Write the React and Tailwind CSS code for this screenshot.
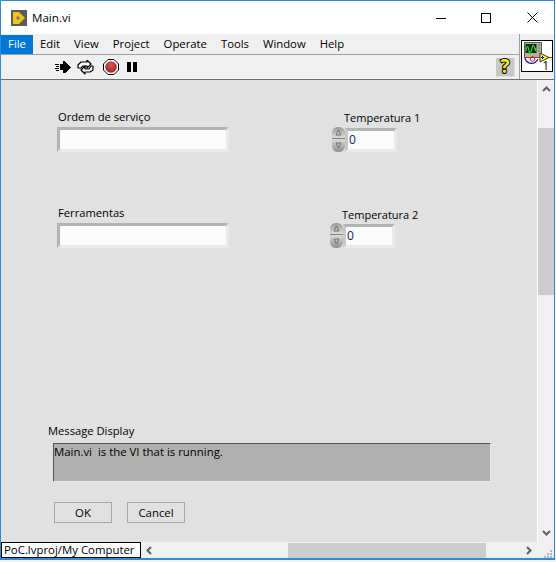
const menus = ['Edit', 'View', 'Project', 'Operate', 'Tools', 'Window', 'Help'];

function RunArrow() {
  return (
    <svg width="16" height="13" viewBox="0 0 16 13" shapeRendering="crispEdges" className="mt-[1px]">
      <path fill="#000" d="M8 0h2v1h1v1h1v1h1v1h1v1h1v1h1v1h-1v1h-1v1h-1v1h-1v1h-1v1H8v-3H5V3h3z" />
      <path fill="#000" d="M0 3h4v1H0zM1 5h3v1H1zM0 7h4v1H0zM1 9h3v1H1z" />
    </svg>
  );
}

function RunContinuous() {
  return (
    <svg width="17" height="15" viewBox="0 0 17 15" fill="#fff" stroke="#000" strokeWidth="1.200" strokeLinejoin="round">
      <path d="M1 8V5l3-3h6V0l4 4-4 4V6H6L4 8z" />
      <path d="M16 6v4l-3 2H8v2L4 10l4-4v3h4l2-3z" />
    </svg>
  );
}

function StopButton() {
  return (
    <svg width="16" height="16" viewBox="0 0 16 16">
      <defs>
        <radialGradient id="stop" cx="50%" cy="35%" r="70%">
          <stop offset="0" stopColor="#d45a5a" />
          <stop offset="1" stopColor="#a31c1c" />
        </radialGradient>
      </defs>
      <path d="M5 .5h6L15.500 5v6L11 15.500H5L.5 11V5z" fill="#fff" stroke="#000" />
      <circle cx="8" cy="8" r="5.800" fill="url(#stop)" />
    </svg>
  );
}

function HelpIcon() {
  return (
    <div className="ml-auto mr-[4px] flex h-[19px] w-[19px] items-center justify-center border-r border-b border-[#dcdcdc] bg-[#c8c8c8]">
      <span className="text-[19px] font-bold leading-none text-[#f5e61e] [-webkit-text-stroke:2px_#000] [paint-order:stroke_fill]">
        ?
      </span>
    </div>
  );
}

function ViIcon() {
  return (
    <div className="relative h-[32px] w-[32px] border border-black bg-white">
      <svg width="30" height="30" viewBox="0 0 30 30" className="absolute left-0 top-0">
        <rect x="2.500" y="1.500" width="17" height="15" fill="#b3b69a" stroke="#555" />
        <rect x="3.500" y="3" width="11" height="9" fill="#0c2a10" />
        <path d="M4 10c1-6 2-6 3 0s2 1 3-3 2-3 3 1 1 0 1-1" fill="none" stroke="#27d63a" strokeWidth="1.200" />
        <path d="M16 4h2M16 7h2M16 10h2" stroke="#666" />
        <path d="M3 17c2 7 10 7 13 1" fill="none" stroke="#1a1a9c" strokeWidth="1.200" />
        <path d="M3 16.500h15M26 16.500h4" stroke="#d12020" />
        <circle cx="10.500" cy="18" r="2.300" fill="none" stroke="#d12020" />
        <path d="M18 12l9 4.500-9 4.500z" fill="#f7ee2a" stroke="#333" />
        <path d="M19 16.500h3M20.500 15v3" stroke="#000" />
      </svg>
      <span className="absolute bottom-[1px] right-[3px] text-[12px] leading-[9px] text-black">1</span>
    </div>
  );
}

function TextControl({ label, className }) {
  return (
    <div className={className}>
      <div className="pl-[1px] text-[11.2px] leading-[16px] text-black">{label}</div>
      <div className="mt-[2px] h-[25px] w-[172px] border-[3px] border-t-[#b4b4b4] border-l-[#b4b4b4] border-r-[#eaeaea] border-b-[#eaeaea] bg-[#fbfbfb]" />
    </div>
  );
}

function NumericControl({ label, className, gapClass }) {
  return (
    <div className={className}>
      <div className="pl-[12px] text-[11px] leading-[16px] text-black">{label}</div>
      <div className={`${gapClass} flex items-center`}>
        <div className="flex h-[25px] w-[13px] flex-col overflow-hidden rounded-[6px] bg-[#bdbdbd]">
          <div className="flex h-[12px] items-center justify-center border-b border-[#808080] bg-gradient-to-b from-[#999999] to-[#dcdcdc]">
            <svg width="7" height="7" viewBox="0 0 7 7"><path d="M3.500 1 6 6H1z" fill="none" stroke="#707070" /></svg>
          </div>
          <div className="flex flex-1 items-center justify-center bg-gradient-to-b from-[#dcdcdc] to-[#8e8e8e]">
            <svg width="7" height="7" viewBox="0 0 7 7"><path d="M3.500 6 6 1H1z" fill="none" stroke="#707070" /></svg>
          </div>
        </div>
        <div className="h-[24px] w-[52px] border-[3px] border-t-[#b4b4b4] border-l-[#c8c8c8] border-r-[#eaeaea] border-b-[#eaeaea] bg-[#fbfbfb] pl-[1px] text-[12px] leading-[17px] text-[#0b2a5a]">
          0
        </div>
      </div>
    </div>
  );
}

function PanelButton({ children }) {
  return (
    <div className="flex h-[21px] w-[58px] items-center justify-center border border-[#a8a8a8] text-[11.4px] text-black">
      {children}
    </div>
  );
}

export default function App() {
  return (
    <div className="h-[562px] w-[556px] overflow-hidden bg-[#f2f2f2] font-['Open_Sans','Noto_Sans',sans-serif]">
      <div className="flex h-[560px] w-[555px] flex-col border-x border-t border-b-2 border-[#2a8ce0]">
        {/* title bar */}
        <div className="flex h-[33px] items-center bg-white pl-[10px]">
          <div className="flex h-[16px] w-[16px] items-center justify-center bg-[#5b5b5b]">
            <svg width="14" height="14" viewBox="0 0 14 14">
              <path d="M1 1h6l6 6-6 6H1z" fill="#f2c21b" />
              <path d="M4 7h4M6 5v4" stroke="#5a6a9a" />
            </svg>
          </div>
          <span className="ml-[5px] text-[11.6px] text-black">Main.vi</span>
          <div className="ml-auto flex items-center">
            <svg width="10" height="10" viewBox="0 0 10 10" shapeRendering="crispEdges" className="mr-[35px]"><path d="M0 5.500h10" stroke="#000" /></svg>
            <svg width="10" height="10" viewBox="0 0 10 10" shapeRendering="crispEdges" className="mr-[36px]"><rect x=".5" y=".5" width="9" height="9" fill="none" stroke="#000" /></svg>
            <svg width="11" height="11" viewBox="0 0 11 11" className="mr-[16px]"><path d="M.5.5l10 10M10.500.5l-10 10" stroke="#000" /></svg>
          </div>
        </div>

        {/* menu and toolbar, with the VI icon at the right */}
        <div className="flex h-[46px] border-b border-[#6e6e6e] bg-[#f0f0f0]">
          <div className="flex min-w-0 flex-1 flex-col">
            <div className="flex h-[20px] items-center text-[11.3px] text-black">
              <div className="flex h-[19px] w-[32px] items-center justify-center bg-[#0078d7] text-white">File</div>
              <div className="ml-[7px] flex items-center gap-[14px]">
                {menus.map((m) => (
                  <span key={m}>{m}</span>
                ))}
              </div>
            </div>
            <div className="h-[1px] bg-[#a0a0a0]" />
            <div className="flex flex-1 items-center pl-[54px]">
              <RunArrow />
              <div className="ml-[6px] flex"><RunContinuous /></div>
              <div className="ml-[9px] flex"><StopButton /></div>
              <div className="ml-[8px] flex gap-[2px]">
                <div className="h-[10px] w-[4px] bg-black" />
                <div className="h-[10px] w-[4px] bg-black" />
              </div>
              <HelpIcon />
            </div>
          </div>
          <div className="w-[35px] border-l border-[#a0a0a0] pl-[1px] pt-[6px]">
            <ViIcon />
          </div>
        </div>

        {/* panel + vertical scrollbar */}
        <div className="flex min-h-0 flex-1">
          <div className="flex w-[536px] flex-col bg-[#e1e1e1]">
            <div className="flex h-[343px]">
              <div className="ml-[56px] w-[285px]">
                <TextControl label="Ordem de serviço" className="mt-[29px]" />
                <TextControl label="Ferramentas" className="mt-[53px]" />
              </div>
              <div>
                <NumericControl label="Temperatura 1" gapClass="mt-[1px]" className="ml-[-10px] mt-[30px]" />
                <NumericControl label="Temperatura 2" gapClass="mt-0" className="ml-[-12px] mt-[55px]" />
              </div>
            </div>
            <div className="ml-[47px]">
              <div className="text-[11.2px] leading-[16px] text-black">Message Display</div>
              <div className="ml-[5px] mt-[4px] h-[39px] w-[438px] border border-[#e8e8e8] border-l-[#555] border-t-[#555] bg-[#b0b0b0] text-[11.4px] leading-[15px] text-black">
                Main.vi&nbsp; is the VI that is running.
              </div>
              <div className="ml-[6px] mt-[20px] flex gap-[15px]">
                <PanelButton>OK</PanelButton>
                <PanelButton>Cancel</PanelButton>
              </div>
            </div>
          </div>
          <div className="flex w-[17px] flex-col items-center border-l border-white bg-[#f0f0f0]">
            <svg width="9" height="6" viewBox="0 0 9 6" className="mt-[6px]"><path d="M1 5l3.500-3.500L8 5" fill="none" stroke="#606060" strokeWidth="2" /></svg>
            <div className="mt-[36px] h-[167px] w-[16px] bg-[#cdcdcd]" />
            <svg width="9" height="6" viewBox="0 0 9 6" className="mb-[6px] mt-auto"><path d="M1 1l3.500 3.500L8 1" fill="none" stroke="#606060" strokeWidth="2" /></svg>
          </div>
        </div>

        {/* status path + horizontal scrollbar */}
        <div className="flex h-[16px] items-center bg-[#f0f0f0]">
          <div className="flex h-[16px] w-[140px] items-center whitespace-nowrap border border-black bg-white pl-[2px] text-[11.4px] leading-none text-black">
            PoC.lvproj/My Computer
          </div>
          <svg width="6" height="9" viewBox="0 0 6 9" className="ml-[5px]"><path d="M5 1 1.500 4.500 5 8" fill="none" stroke="#606060" strokeWidth="2" /></svg>
          <div className="ml-[136px] h-[15px] w-[198px] self-end bg-[#cdcdcd]" />
          <svg width="6" height="9" viewBox="0 0 6 9" className="ml-[40px]"><path d="M1 1l3.500 3.500L1 8" fill="none" stroke="#606060" strokeWidth="2" /></svg>
          <svg width="8" height="8" viewBox="0 0 8 8" shapeRendering="crispEdges" className="ml-[12px] self-end">
            <path fill="#b8b8b8" d="M6 0h2v2H6zM3 3h2v2H3zM6 3h2v2H6zM0 6h2v2H0zM3 6h2v2H3zM6 6h2v2H6z" />
          </svg>
        </div>
      </div>
    </div>
  );
}
